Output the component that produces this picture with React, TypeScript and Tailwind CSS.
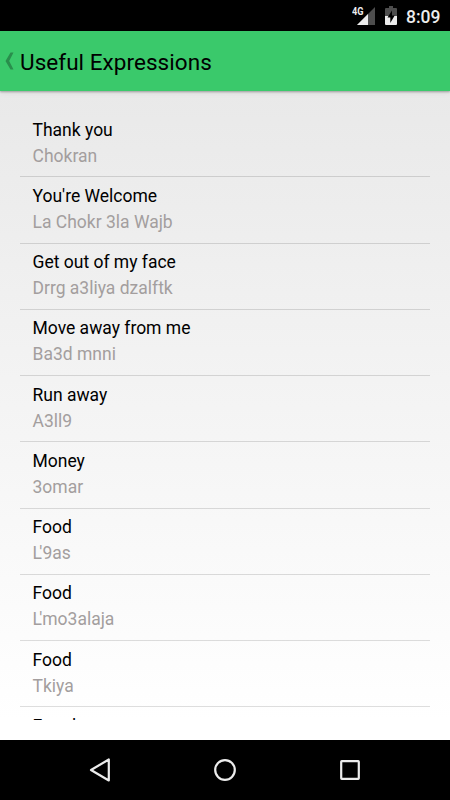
interface Expression {
  id: number;
  english: string;
  darija: string;
}

const expressions: Expression[] = [
  { id: 1, english: 'Thank you', darija: 'Chokran' },
  { id: 2, english: "You're Welcome", darija: 'La Chokr 3la Wajb' },
  { id: 3, english: 'Get out of my face', darija: 'Drrg a3liya dzalftk' },
  { id: 4, english: 'Move away from me', darija: 'Ba3d mnni' },
  { id: 5, english: 'Run away', darija: 'A3ll9' },
  { id: 6, english: 'Money', darija: '3omar' },
  { id: 7, english: 'Food', darija: "L'9as" },
  { id: 8, english: 'Food', darija: "L'mo3alaja" },
  { id: 9, english: 'Food', darija: 'Tkiya' },
  { id: 10, english: 'Freed', darija: '' },
];

function StatusBar() {
  return (
    <div className="flex h-[31px] shrink-0 items-start justify-end bg-black pr-[10px]">
      <svg width="24" height="31" viewBox="0 0 24 31" className="mr-[9px]">
        <path d="M23 7v18H5z" fill="#4d4d4d" />
        <path d="M16 14v11H5z" fill="#ececec" />
        <path d="M0 5h11.5v10.5H0z" fill="#000" />
        <text x="0" y="15" fontSize="10.5" fontWeight="700" fontFamily="Roboto, sans-serif" fill="#ececec" textLength="11.5" lengthAdjust="spacingAndGlyphs">4G</text>
      </svg>
      <svg width="12" height="31" viewBox="0 0 12 31" className="mr-[9px]">
        <path d="M0 9q0-1 1-1h3V6h4v2h3q1 0 1 1v7H0z" fill="#4d4d4d" />
        <path d="M0 16h12v8q0 1-1 1H1q-1 0-1-1z" fill="#ececec" />
        <path d="M7 10.5 2.5 17.5H5.3V23L9.7 15.5H7z" fill="#000" />
      </svg>
      <span className="h-[31px] w-[34px] whitespace-nowrap text-[17.5px] leading-[34px] font-medium text-[#ececec]">8:09</span>
    </div>
  );
}

function Header() {
  return (
    <header className="relative z-10 flex h-[60px] shrink-0 items-center bg-[#3ac96b] shadow-[0_1px_2px_rgba(0,0,0,0.3),0_2px_6px_rgba(0,0,0,0.06)]">
      <svg width="20" height="20" viewBox="0 0 20 20" className="shrink-0">
        <path d="M10.5 1.5h3L9.2 10l4.3 8.5h-3L5.5 10z" fill="#298e4c" />
      </svg>
      <h1 className="pt-[2px] text-[22.5px] leading-[30px] font-normal tracking-[0.05px] text-black">Useful Expressions</h1>
    </header>
  );
}

// The apostrophe after a leading L tucks in close to the stem
function Phrase({ text }: { text: string }) {
  if (!text.startsWith("L'")) return <>{text}</>;
  return (
    <>
      <span className="tracking-[-2.6px]">L</span>
      {text.slice(1)}
    </>
  );
}

function ExpressionRow({ item }: { item: Expression }) {
  return (
    <li className="h-[66.25px] border-b border-black/[0.13] pt-[5.5px] pl-[12.5px]">
      <div className="text-[17.5px] leading-[26px] text-black">{item.english}</div>
      <div className="text-[17.5px] leading-[26px] text-[#a39e9e]">
        <Phrase text={item.darija} />
      </div>
    </li>
  );
}

function NavBar() {
  return (
    <nav className="flex h-[60px] shrink-0 items-center justify-center gap-[85px] bg-black">
      <svg width="40" height="40" viewBox="0 0 40 40" fill="none" stroke="#ececec" strokeWidth="2.2">
        <path d="M28.8 9.5v21L11 20z" strokeLinejoin="round" />
      </svg>
      <svg width="40" height="40" viewBox="0 0 40 40" fill="none" stroke="#ececec" strokeWidth="2.2">
        <circle cx="20" cy="20" r="9.8" />
      </svg>
      <svg width="40" height="40" viewBox="0 0 40 40" fill="none" stroke="#ececec" strokeWidth="2.2">
        <rect x="11.2" y="11.2" width="17.6" height="17.6" rx="0.5" />
      </svg>
    </nav>
  );
}

export default function App() {
  return (
    <div className="flex h-[800px] w-[450px] flex-col overflow-hidden bg-black font-[Roboto,sans-serif]">
      <StatusBar />
      <Header />
      <main className="min-h-0 flex-1 bg-linear-to-b from-[#e9e9e9] to-white to-97% px-5 pt-5 pb-5">
        <ul className="h-full overflow-hidden">
          {expressions.map((item) => (
            <ExpressionRow key={item.id} item={item} />
          ))}
        </ul>
      </main>
      <NavBar />
    </div>
  );
}
